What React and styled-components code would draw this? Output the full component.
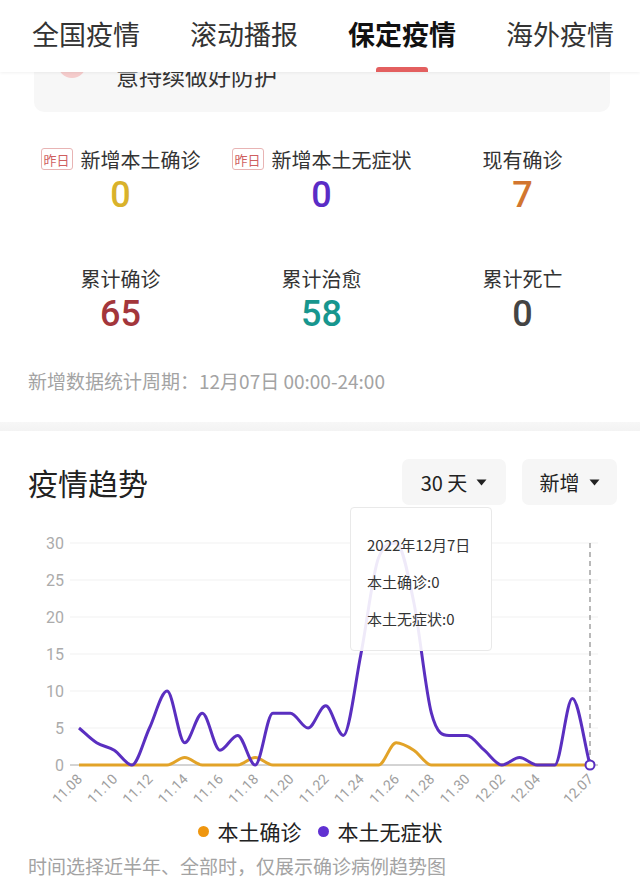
import React from 'react'
import styled, { createGlobalStyle } from 'styled-components'

const GlobalStyle = createGlobalStyle`
  body {
    margin: 0;
    background: #fff;
    font-family: 'Noto Sans CJK SC', 'Noto Sans', sans-serif;
    color: #222;
  }
`

const Page = styled.div`
  width: 640px;
  height: 896px;
  overflow: hidden;
  background: #fff;
`

const Header = styled.div`
  position: relative;
  z-index: 2;
  height: 72px;
  display: flex;
  align-items: stretch;
  gap: 50px;
  padding-left: 32px;
  background: #fff;
  box-shadow: 0 1px 3px rgba(0, 0, 0, 0.06);
`

const Tab = styled.div`
  position: relative;
  display: flex;
  align-items: center;
  padding-bottom: 6px;
  font-size: 27px;
  line-height: 1;
  white-space: nowrap;
  color: ${p => (p.active ? '#111' : '#333')};
  font-weight: ${p => (p.active ? 700 : 400)};
  &::after {
    content: '';
    display: ${p => (p.active ? 'block' : 'none')};
    position: absolute;
    left: 50%;
    bottom: 0;
    width: 52px;
    height: 5px;
    margin-left: -26px;
    border-radius: 3px 3px 0 0;
    background: #e35f5f;
  }
`

/* card scrolled mostly under the sticky header */
const Notice = styled.div`
  margin: -50px 30px 0 34px;
  height: 90px;
  box-sizing: border-box;
  padding: 38px 20px 0 24px;
  display: flex;
  gap: 30px;
  border-radius: 10px;
  background: #f7f7f7;
`

const NoticeIcon = styled.div`
  flex: none;
  width: 28px;
  height: 28px;
  margin-top: -10px;
  border-radius: 50%;
  background: #f5cccc;
`

const NoticeText = styled.div`
  font-size: 23px;
  line-height: 30px;
  color: #333;
`

const Stats = styled.div`
  display: grid;
  grid-template-columns: repeat(3, 1fr);
  row-gap: 47px;
  padding: 33px 17px 0 20px;
`

const Stat = styled.div`
  display: flex;
  flex-direction: column;
  align-items: center;
`

const StatLabel = styled.div`
  display: flex;
  align-items: center;
  gap: 8px;
  height: 28px;
  font-size: 20px;
  color: #333;
`

const Badge = styled.span`
  display: inline-flex;
  align-items: center;
  justify-content: center;
  width: 32px;
  height: 22px;
  box-sizing: border-box;
  border: 1px solid #e8b4b4;
  border-radius: 3px;
  font-size: 13px;
  color: #cf5f5f;
`

const StatValue = styled.div`
  font-family: Roboto, 'Noto Sans', sans-serif;
  font-size: 36px;
  line-height: 44px;
  font-weight: 500;
  color: ${p => p.color};
`

const Note = styled.div`
  padding: ${p => p.pad || '0 28px'};
  font-size: 19px;
  line-height: 26px;
  color: #a3a3a3;
`

const Band = styled.div`
  height: 9px;
  background: linear-gradient(#f7f7f7, #f3f3f3);
`

const TrendHead = styled.div`
  display: flex;
  align-items: center;
  padding: 28px 23px 0 28px;
`

const Title = styled.div`
  flex: 1;
  font-size: 30px;
  line-height: 46px;
  color: #222;
`

const Picker = styled.div`
  display: flex;
  align-items: center;
  justify-content: center;
  gap: 9px;
  width: ${p => p.w}px;
  height: 46px;
  margin-left: ${p => p.ml || 0}px;
  border-radius: 7px;
  background: #f6f6f6;
  font-size: 20px;
  color: #222;
`

const ChartWrap = styled.div`
  position: relative;
  padding-top: 20px;
  svg {
    display: block;
  }
`

const Tooltip = styled.div`
  position: absolute;
  left: 350px;
  top: 2px;
  width: 142px;
  height: 144px;
  box-sizing: border-box;
  padding: 18px 0 0 16px;
  border: 1px solid #e9e9e9;
  border-radius: 4px;
  background: rgba(255, 255, 255, 0.9);
  font-size: 15px;
  line-height: 37px;
  color: #333;
`

const Legend = styled.div`
  display: flex;
  justify-content: center;
  align-items: center;
  gap: 16px;
  margin-top: 6px;
  font-size: 21px;
  line-height: 30px;
  color: #222;
`

const LegendItem = styled.div`
  display: flex;
  align-items: center;
  gap: 9px;
  &::before {
    content: '';
    width: 11px;
    height: 11px;
    border-radius: 50%;
    background: ${p => p.color};
  }
`

const Caret = () => (
  <svg width="11" height="7" viewBox="0 0 11 7">
    <path d="M0.5 0.5h10L5.5 6.5z" fill="#222" />
  </svg>
)

const purple = [5, 3, 2, 0, 5, 10, 3, 7, 2, 4, 0, 7, 7, 5, 8, 4, 15, 28, 30, 22, 7, 4, 4, 2, 0, 1, 0, 0, 9, 0]
const orange = purple.map((_, i) => ({ 6: 1, 10: 1, 18: 3, 19: 2 }[i] || 0))

const days = purple.map((_, i) => {
  const d = new Date(2022, 10, 8 + i)
  return `${d.getMonth() + 1}.${String(d.getDate()).padStart(2, '0')}`
})

const X0 = 79
const STEP = 511 / 29
const BASE = 240
const xAt = i => X0 + i * STEP
const yAt = v => BASE - v * 7.4

// monotone cubic, no overshoot at the flat parts
function smoothPath(values) {
  const pts = values.map((v, i) => [xAt(i), yAt(v)])
  const n = pts.length
  const m = []
  for (let i = 0; i < n - 1; i++) m[i] = (pts[i + 1][1] - pts[i][1]) / STEP
  const t = [m[0]]
  for (let i = 1; i < n - 1; i++) t[i] = m[i - 1] * m[i] <= 0 ? 0 : (m[i - 1] + m[i]) / 2
  t[n - 1] = m[n - 2]
  for (let i = 0; i < n - 1; i++) {
    if (m[i] === 0) {
      t[i] = 0
      t[i + 1] = 0
      continue
    }
    const a = t[i] / m[i]
    const b = t[i + 1] / m[i]
    const s = a * a + b * b
    if (s > 9) {
      const k = 3 / Math.sqrt(s)
      t[i] = k * a * m[i]
      t[i + 1] = k * b * m[i]
    }
  }
  const h = STEP / 3
  let d = `M${pts[0][0]},${pts[0][1]}`
  for (let i = 0; i < n - 1; i++) {
    const [x0, y0] = pts[i]
    const [x1, y1] = pts[i + 1]
    d += ` C${x0 + h},${y0 + t[i] * h} ${x1 - h},${y1 - t[i + 1] * h} ${x1},${y1}`
  }
  return d
}

const labelIdx = [0, 2, 4, 6, 8, 10, 12, 14, 16, 18, 20, 22, 24, 26, 29]

const Chart = () => (
  <svg width="640" height="285" viewBox="0 0 640 285">
    {[0, 5, 10, 15, 20, 25, 30].map(v => (
      <g key={v}>
        <line x1="70" x2="598" y1={yAt(v)} y2={yAt(v)} stroke={v === 0 ? '#a8a8a8' : '#f1f1f1'} strokeWidth="1" />
        <text x="64" y={yAt(v)} dy="5.5" textAnchor="end" fontSize="16" fill="#ababab" fontFamily="Roboto, sans-serif">
          {v}
        </text>
      </g>
    ))}
    <line x1={xAt(29)} x2={xAt(29)} y1={yAt(30)} y2={BASE} stroke="#8a8a8a" strokeWidth="1.2" strokeDasharray="5 4" />
    <path d={smoothPath(orange)} fill="none" stroke="#e2a328" strokeWidth="3" strokeLinejoin="round" />
    <path d={smoothPath(purple)} fill="none" stroke="#5a2fc0" strokeWidth="3" strokeLinejoin="round" />
    <circle cx={xAt(29)} cy={BASE} r="4.5" fill="#fff" stroke="#5a2fc0" strokeWidth="2" />
    {labelIdx.map(i => (
      <text
        key={i}
        transform={`translate(${xAt(i) + 4}, 255) rotate(-45)`}
        textAnchor="end"
        fontSize="14"
        fill="#9e9e9e"
        fontFamily="Roboto, sans-serif">
        {days[i]}
      </text>
    ))}
  </svg>
)

const stats = [
  { label: '新增本土确诊', value: 0, color: '#d9b22b', badge: true },
  { label: '新增本土无症状', value: 0, color: '#5a2cc6', badge: true },
  { label: '现有确诊', value: 7, color: '#d2762f' },
  { label: '累计确诊', value: 65, color: '#a3363b' },
  { label: '累计治愈', value: 58, color: '#17968e' },
  { label: '累计死亡', value: 0, color: '#444' },
]

const tabs = ['全国疫情', '滚动播报', '保定疫情', '海外疫情']

export default function App() {
  return (
    <Page>
      <GlobalStyle />
      <Header>
        {tabs.map(t => (
          <Tab key={t} active={t === '保定疫情'}>
            {t}
          </Tab>
        ))}
      </Header>
      <Notice>
        <NoticeIcon />
        <NoticeText>意持续做好防护</NoticeText>
      </Notice>
      <Stats>
        {stats.map(s => (
          <Stat key={s.label}>
            <StatLabel>
              {s.badge && <Badge>昨日</Badge>}
              {s.label}
            </StatLabel>
            <StatValue color={s.color}>{s.value}</StatValue>
          </Stat>
        ))}
      </Stats>
      <Note pad="32px 28px 28px">新增数据统计周期：12月07日 00:00-24:00</Note>
      <Band />
      <TrendHead>
        <Title>疫情趋势</Title>
        <Picker w={104}>
          30 天 <Caret />
        </Picker>
        <Picker w={95} ml={16}>
          新增 <Caret />
        </Picker>
      </TrendHead>
      <ChartWrap>
        <Chart />
        <Tooltip>
          <div>2022年12月7日</div>
          <div>本土确诊:0</div>
          <div>本土无症状:0</div>
        </Tooltip>
      </ChartWrap>
      <Legend>
        <LegendItem color="#ef960f">本土确诊</LegendItem>
        <LegendItem color="#6031d2">本土无症状</LegendItem>
      </Legend>
      <Note pad="7px 28px 0">时间选择近半年、全部时，仅展示确诊病例趋势图</Note>
    </Page>
  )
}
